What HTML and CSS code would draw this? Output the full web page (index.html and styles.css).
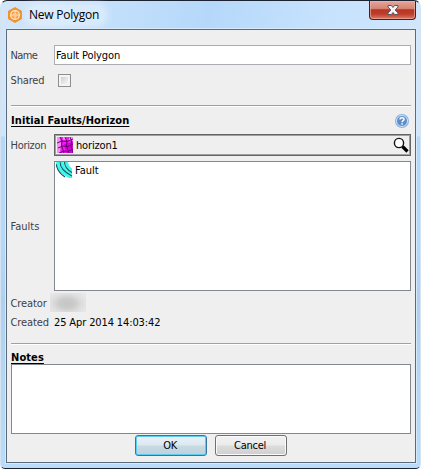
FILE: index.html
```html
<!DOCTYPE html>
<html lang="en">
<head>
<meta charset="utf-8">
<title>New Polygon</title>
<link rel="stylesheet" href="styles.css">
</head>
<body>
<div class="window">
  <header class="titlebar">
    <svg class="app-icon" width="16" height="16" viewBox="0 0 16 16"><path d="M8 0l7 4v8l-7 4-7-4V4z" fill="#ef922f"/><circle cx="8" cy="8" r="4.300" fill="#f39c3d" stroke="#ffe9ca" stroke-width="1.300"/><path d="M8 4v8M4 8h8" stroke="#ffe0b8"/><circle cx="8" cy="8" r="2" fill="none" stroke="#ffd29a" stroke-width=".7"/></svg>
    <h1 class="title">New Polygon</h1>
    <button class="close" aria-label="Close"><svg width="12" height="10" viewBox="0 0 12 10"><path d="M1 .5h3.400L6 2.500 7.600.5H11v1.400L8.200 5 11 8.100v1.400H7.600L6 7.500 4.400 9.500H1V8.100L3.800 5 1 1.900z" fill="#f5f5f5" stroke="#5a5460"/></svg></button>
  </header>
  <main class="panel">
    <div class="row"><label class="t-name">Name</label><div class="input"><span class="t-poly">Fault Polygon</span></div></div>
    <div class="row row-shared"><label class="t-shared">Shared</label><div class="checkbox"></div></div>
    <div class="rule"></div>
    <div class="section"><h2>Initial Faults/Horizon</h2>
      <svg width="16" height="16" viewBox="0 0 16 16"><circle cx="8" cy="8" r="7" fill="#8bb2de"/><circle cx="8" cy="8" r="5.500" fill="#5c8dc8" stroke="#d3e4f5"/><path d="M6 6.500C6 4.200 10.100 4.300 10 6.400 9.900 7.700 8.100 7.600 8.100 9.200M8.100 10.200v1.500" fill="none" stroke="#fff" stroke-width="1.500"/></svg>
    </div>
    <div class="row row-horizon"><label class="t-horizon">Horizon</label>
      <div class="picker">
        <svg width="16" height="16" viewBox="0 0 16 16"><path d="M0 0h16v16H0z" fill="#f31cf3"/><path d="M0 0h3l1 7-1 9H0zM12 0h4v4h-4zM6 0h3v3H6z" fill="#ff86ff"/><path d="M7 7l9-2v11H9z" fill="#d900df"/><path d="M0 6l5-2 5 .5L16 2M1 11l5-2 5 .5 5-2.500M2 16l5-2 4 .5 5-2.500M3 0l2 4-.5 5L7 16M8 0l2 5-.5 4 2.500 7M13 0l1.500 4-.5 5 2 7" fill="none" stroke="#5c0061" stroke-width=".9"/></svg>
        <span class="t-h1">horizon1</span>
        <svg class="search" width="16" height="16" viewBox="0 0 16 16"><path d="M9.500 9.500l5 5" stroke="#000" stroke-width="3.200"/><circle cx="6" cy="6" r="4.600" fill="#fff" stroke="#111" stroke-width="1.400"/></svg>
      </div>
    </div>
    <div class="row row-faults"><label class="t-faults">Faults</label>
      <div class="list"><div class="item">
        <svg width="16" height="16" viewBox="0 0 16 16"><g fill="none"><path d="M1.500 0C2 6 6 12 16 15.500M6 0c0 5 4 10 10 12.500M10.500 0c0 3 2 6 5.500 8.500" stroke="#3ff6ee" stroke-width="3.200"/><path d="M0 2c1 5 4 10 9 13M4 0c0 5 4 10 12 14M8.500 0c0 4 3 8 7.500 10.500" stroke="#06545a" stroke-width="1.100"/></g></svg>
        <span class="t-fault">Fault</span></div></div>
    </div>
    <div class="row row-creator"><label class="t-creator">Creator</label><div class="redacted"></div></div>
    <div class="row row-created"><label class="t-created">Created</label><span class="t-date">25 Apr 2014 14:03:42</span></div>
    <div class="rule"></div>
    <div class="notes-heading"><h2>Notes</h2></div>
    <div class="notes"></div>
    <div class="actions"><button class="button primary"><span class="t-ok">OK</span></button><button class="button"><span class="t-cancel">Cancel</span></button></div>
  </main>
</div>
</body>
</html>
```
FILE: styles.css
```css
* { box-sizing: border-box; }
body { margin: 0; background: #fff; font: 11px/14px "DejaVu Sans Condensed", "DejaVu Sans", sans-serif; font-stretch: condensed; color: #000; }
h1, h2 { margin: 0; font-size: inherit; }
svg { display: block; flex: none; }
span, label, h2 { white-space: nowrap; }
.window {
  width: 421px; height: 469px; padding: 0 4px 5px 5px; display: flex; flex-direction: column;
  border: 1px solid #1c2230; border-left-color: #d5e3f0; border-right-color: #d5e3f0; border-radius: 7px 7px 5px 5px;
  background: linear-gradient(#fff0 0 135px, #b5d8f9 136px 240px, #b1d0f0 300px, #b9dcfa), linear-gradient(100deg, #d2e6fa, #c1dffb 25%, #b5d8fa 42%, #c6e2fd 65%, #d8eafd);
}
.titlebar { height: 28px; display: flex; align-items: flex-start; padding-left: 1px; flex: none; }
.app-icon { margin-top: 6px; }
.title { margin: 4px 0 0 5px; padding: 1px 6px 1px 1px; font: 12px/18px "Open Sans", "Noto Sans", sans-serif; letter-spacing: -.25px; border-radius: 9px; background: #e9f4fe80; box-shadow: 0 0 6px 3px #e9f4fe80; }
.close { margin-left: auto; width: 47px; height: 19px; padding: 0 0 1px; display: flex; align-items: center; justify-content: center; border: 1px solid #491c23; border-top: 0; border-radius: 0 0 4px 4px; background: linear-gradient(#e5a69b, #d68171 44%, #b93524 48%, #bd3d2b 72%, #dc7b64); box-shadow: inset 0 0 0 1px #efb5a9a0; }
.panel { flex: 1; border: 1px solid #5a6b7c; padding: 15px 4px 0; background: #efefef; display: flex; flex-direction: column; box-shadow: 0 0 0 1px #d7eafc; }
.row { display: grid; grid-template-columns: 43px 1fr; align-items: center; flex: none; }
label { color: #40404a; margin-left: -.5px; padding-top: 1px; }
.input { height: 20px; border: 1px solid #abadb3; background: #fff; display: flex; align-items: center; padding: 1px 0 0 1px; }
.row-shared { height: 30px; }
.checkbox { width: 13px; height: 13px; margin-left: 4px; border: 1px solid #8e8f8f; background: linear-gradient(135deg, #cbcfd5, #f6f6f6) content-box, #f4f4f4; padding: 2px; }
.row-shared + .rule { margin-top: 10px; }
.rule { height: 2px; flex: none; border-top: 1px solid #a0a0a0; border-bottom: 1px solid #fff; }
.section { height: 27px; display: flex; align-items: center; justify-content: space-between; padding-right: 1px; }
h2 { font-weight: bold; letter-spacing: .1px; text-decoration: underline; text-underline-offset: 2px; text-decoration-thickness: 1px; text-decoration-skip-ink: none; }
.picker { height: 22px; border: 1px solid #646464; box-shadow: inset 0 0 0 1px #a0a0a0; padding: 0 1px 0 2px; display: flex; align-items: center; gap: 3px; }
.picker span, .item span { padding-top: 1px; }
.search { margin-left: auto; }
.row-faults { margin-top: 5px; }
.list { height: 130px; background: #fff; border: 1px solid #828790; padding-left: 1px; }
.item { height: 16px; display: flex; align-items: center; gap: 3px; }
.row-creator { height: 23px; }
.row-creator label { padding-top: 2px; }
.redacted { width: 36px; height: 19px; margin-left: -4px; background: radial-gradient(ellipse 60% 70% at 47% 55%, #c5c5c6 0, #cbcbcb 35%, #dedede 70%, #e7e7e7 100%); }
.row-created { height: 16px; margin-bottom: 13px; }
.row-created span { padding-top: 1px; }
.notes-heading { height: 19px; display: flex; align-items: center; padding-top: 6px; }
.notes { height: 70px; border: 1px solid #828790; background: #fff; flex: none; }
.actions { display: flex; justify-content: center; gap: 8px; margin-top: 1px; }
.button { width: 72px; height: 21px; padding: 0 2px 0 0; display: flex; align-items: center; justify-content: center; border: 1px solid #707070; border-radius: 3px; background: linear-gradient(#f2f2f2, #ebebeb 48%, #dcdcdc 52%, #cfcfcf); box-shadow: inset 0 0 0 1px #fafafa; font: inherit; color: #000; }
.primary { border-color: #3078a8; background: linear-gradient(#eaf2f6, #dce9ef 48%, #c8dae3 52%, #bdd1dc); box-shadow: inset 0 0 0 1px #5ccdf1; }
.t-name { letter-spacing: -.6px; }
.t-shared { letter-spacing: -.15px; }
.t-horizon { letter-spacing: -.3px; }
.t-h1 { letter-spacing: -.15px; }
.t-creator, .t-created { letter-spacing: -.1px; }
.t-poly, .t-date { letter-spacing: -.12px; }
.t-ok { letter-spacing: -.4px; }
.t-cancel { letter-spacing: -.25px; }
```
